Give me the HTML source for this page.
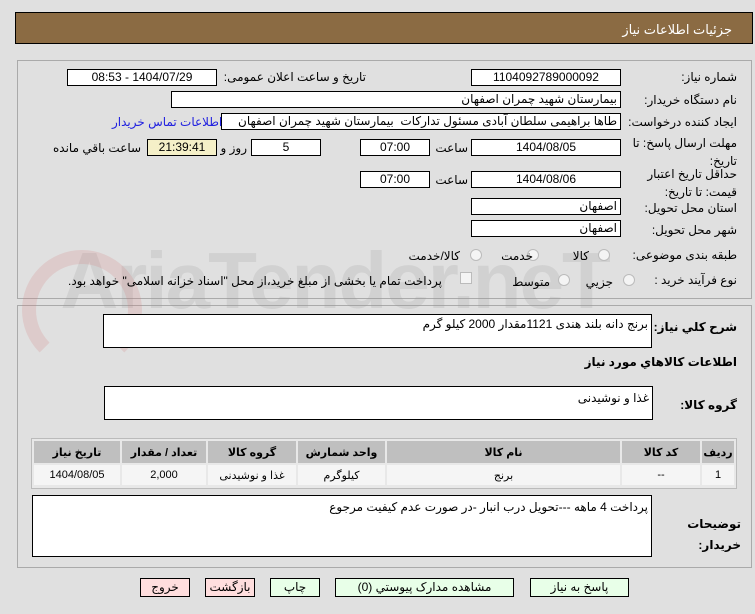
<!DOCTYPE html>
<html><head><meta charset="utf-8"><style>
*{box-sizing:border-box;margin:0;padding:0}
body{width:755px;height:614px;background:#e0e0e0;font-family:"Liberation Sans","DejaVu Sans",sans-serif;font-size:12px;color:#000;position:relative;overflow:hidden;direction:rtl}
.a{position:absolute}
.hdr{left:15px;top:12px;width:738px;height:32px;background:#8b6b43;border:1px solid #000;color:#fff;font-size:13px;padding:9px 20px 0 0;text-align:right}
.sec{border:1px solid #aaa}
.box{position:absolute;background:#fff;border:1px solid #000;height:17px;line-height:15px;padding:0 3px;text-align:right;font-size:12px}
.c{text-align:center}
.lbl{position:absolute;text-align:right;white-space:nowrap;font-size:12px;line-height:15px}
.b{font-weight:bold}
.rad{position:absolute;width:12px;height:12px;border:1px solid #bbb;border-radius:50%;background:#f4f4f4}
table{border-collapse:separate;border-spacing:2px;font-size:11px}
td,th{text-align:center}
th{background:#bfbfbf;height:22px;font-weight:bold}
td{background:#f5f5f5;height:20px}
.btn{position:absolute;top:578px;height:19px;border:1px solid #000;text-align:center;line-height:17px;font-size:12px}
.g{background:#e8ffe8}.p{background:#ffdede}
</style></head><body>
<div class="a hdr">جزئیات اطلاعات نیاز</div>
<div class="a sec" style="left:17px;top:60px;width:735px;height:239px"></div>
<div class="a sec" style="left:17px;top:305px;width:735px;height:263px"></div>
<div class="a" style="left:20px;top:235px;font-size:80px;font-weight:bold;color:rgba(150,150,150,.2);direction:ltr;font-family:'Liberation Sans',sans-serif;letter-spacing:-2px">&nbsp;&nbsp;AriaTender.neT</div>
<div class="a" style="left:22px;top:250px;width:120px;height:120px;border:14px solid rgba(210,120,120,.2);border-radius:50%;border-bottom-color:transparent"></div>

<div class="lbl" style="right:18px;top:70px">شماره نیاز:</div>
<div class="box c" style="left:471px;top:69px;width:150px">1104092789000092</div>
<div class="lbl" style="right:389px;top:70px">تاریخ و ساعت اعلان عمومی:</div>
<div class="box c" style="left:67px;top:69px;width:150px">1404/07/29 - 08:53</div>

<div class="lbl" style="right:18px;top:93px">نام دستگاه خریدار:</div>
<div class="box" style="left:171px;top:91px;width:450px">بیمارستان شهید چمران اصفهان</div>

<div class="lbl" style="right:18px;top:115px">ایجاد کننده درخواست:</div>
<div class="box" style="left:221px;top:113px;width:400px">طاها براهیمی سلطان آبادی مسئول تدارکات&nbsp; بیمارستان شهید چمران اصفهان</div>
<div class="lbl" style="left:112px;top:115px;color:#2020e0">اطلاعات تماس خریدار</div>

<div class="lbl" style="right:18px;top:134px;line-height:18px">مهلت ارسال پاسخ: تا<br>تاریخ:</div>
<div class="box c" style="left:471px;top:139px;width:150px">1404/08/05</div>
<div class="lbl" style="right:287px;top:141px">ساعت</div>
<div class="box c" style="left:360px;top:139px;width:70px">07:00</div>
<div class="box c" style="left:251px;top:139px;width:70px">5</div>
<div class="lbl" style="right:508px;top:141px">روز و</div>
<div class="box c" style="left:147px;top:139px;width:70px;background:#f5f0c8">21:39:41</div>
<div class="lbl" style="left:53px;top:141px">ساعت باقي مانده</div>

<div class="lbl" style="right:18px;top:165px;line-height:18px">حداقل تاریخ اعتبار<br>قیمت: تا تاریخ:</div>
<div class="box c" style="left:471px;top:171px;width:150px">1404/08/06</div>
<div class="lbl" style="right:287px;top:173px">ساعت</div>
<div class="box c" style="left:360px;top:171px;width:70px">07:00</div>

<div class="lbl" style="right:18px;top:201px">استان محل تحویل:</div>
<div class="box" style="left:471px;top:198px;width:150px">اصفهان</div>
<div class="lbl" style="right:18px;top:223px">شهر محل تحویل:</div>
<div class="box" style="left:471px;top:220px;width:150px">اصفهان</div>

<div class="lbl" style="right:18px;top:248px">طبقه بندی موضوعی:</div>
<div class="rad" style="left:598px;top:249px"></div><div class="lbl" style="right:166px;top:249px">کالا</div>
<div class="rad" style="left:527px;top:249px"></div><div class="lbl" style="right:222px;top:249px">خدمت</div>
<div class="rad" style="left:470px;top:249px"></div><div class="lbl" style="right:295px;top:249px">کالا/خدمت</div>

<div class="lbl" style="right:18px;top:273px">نوع فرآیند خرید :</div>
<div class="rad" style="left:623px;top:274px"></div><div class="lbl" style="right:142px;top:275px">جزیي</div>
<div class="rad" style="left:558px;top:274px"></div><div class="lbl" style="right:205px;top:275px">متوسط</div>
<div class="a" style="left:460px;top:272px;width:12px;height:12px;border:1px solid #bbb;background:#f4f4f4"></div>
<div class="lbl" style="left:68px;top:274px">پرداخت تمام یا بخشی از مبلغ خرید،از محل "اسناد خزانه اسلامی" خواهد بود.</div>

<div class="lbl b" style="right:18px;top:320px">شرح کلي نیاز:</div>
<div class="box" style="left:103px;top:314px;width:549px;height:34px;padding-top:2px">برنج دانه بلند هندی 1121مقدار 2000 کیلو گرم</div>
<div class="lbl b" style="right:18px;top:355px">اطلاعات کالاهاي مورد نیاز</div>
<div class="lbl b" style="right:18px;top:398px">گروه کالا:</div>
<div class="box" style="left:104px;top:386px;width:549px;height:34px;padding-top:4px">غذا و نوشیدنی</div>

<div class="a" style="left:31px;top:438px;width:706px;height:51px;border:1px solid #bbb;background:#e8e8e8">
<table style="width:704px">
<tr><th style="width:32px">رديف</th><th style="width:78px">کد کالا</th><th style="width:233px">نام کالا</th><th style="width:87px">واحد شمارش</th><th style="width:88px">گروه کالا</th><th style="width:84px">تعداد / مقدار</th><th>تاریخ نیاز</th></tr>
<tr><td>1</td><td>--</td><td>برنج</td><td>کیلوگرم</td><td>غذا و نوشیدنی</td><td>2,000</td><td>1404/08/05</td></tr>
</table></div>

<div class="lbl b" style="right:14px;top:514px;line-height:21px">توضیحات<br>خریدار:</div>
<div class="box" style="left:32px;top:495px;width:620px;height:62px;padding-top:4px">پرداخت 4 ماهه ---تحویل درب انبار -در صورت عدم کیفیت مرجوع</div>

<div class="btn g" style="left:530px;width:99px">پاسخ به نیاز</div>
<div class="btn g" style="left:335px;width:179px">مشاهده مدارک پیوستي (0)</div>
<div class="btn g" style="left:270px;width:50px">چاپ</div>
<div class="btn p" style="left:205px;width:50px">بازگشت</div>
<div class="btn p" style="left:140px;width:50px">خروج</div>
</body></html>
